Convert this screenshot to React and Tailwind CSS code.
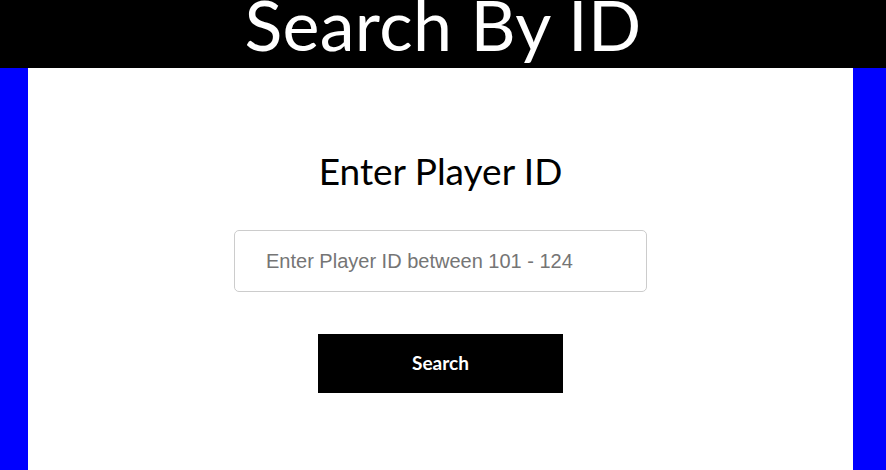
import React from "react";

export default function App() {
  return (
    <div className="w-[886px] h-[470px] overflow-hidden flex flex-col bg-[#0000ff]" style={{ fontFamily: "Lato, 'Open Sans', sans-serif" }}>
      {/* Header */}
      <div className="h-[68px] shrink-0 bg-black flex justify-center overflow-hidden">
        <h1 className="text-white text-[70px] leading-[68px] -mt-[10px] tracking-[0.3px]">Search By ID</h1>
      </div>

      {/* Body */}
      <div className="flex-1 flex">
        <div className="w-[28px] shrink-0" />
        <div className="w-[825px] bg-white flex flex-col items-center">
          <h2 className="mt-[80px] text-[37px] leading-[46px] text-black">Enter Player ID</h2>
          <input
            type="text"
            placeholder="Enter Player ID between 101 - 124"
            className="mt-[36px] w-[413px] h-[62px] border border-[#cccccc] rounded-[5px] pl-[31px] text-[20px] placeholder:text-[#757575] outline-none"
            style={{ fontFamily: "'Liberation Sans', Arial, sans-serif" }}
          />
          <button className="mt-[42px] w-[245px] h-[59px] bg-black text-white text-[19px] font-bold">
            Search
          </button>
        </div>
        <div className="flex-1" />
      </div>
    </div>
  );
}
